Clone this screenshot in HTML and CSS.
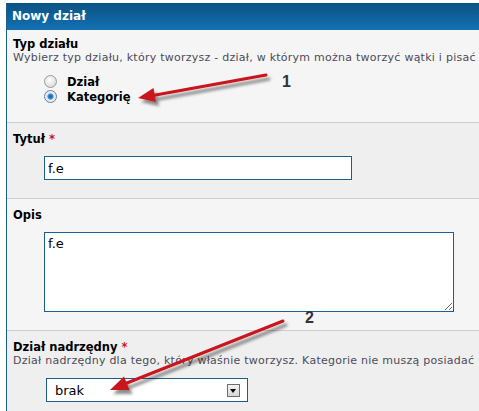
FILE: index.html
```html
<!DOCTYPE html>
<html lang="pl">
<head>
    <meta charset="UTF-8">
    <title>Nowy dział</title>
    <link rel="stylesheet" href="styles.css">
</head>
<body>
    <div class="panel">
        <div class="panel-head">Nowy dział</div>

        <div class="row light first">
            <div class="label">Typ działu</div>
            <div class="hint">Wybierz typ działu, który tworzysz - dział, w którym można tworzyć wątki i pisać</div>
            <div class="radios">
                <label class="radio"><span class="dot"></span>Dział</label>
                <label class="radio"><span class="dot on"></span>Kategorię</label>
            </div>
        </div>

        <div class="row">
            <div class="label">Tytuł <span class="req">*</span></div>
            <div class="field">
                <input type="text" class="text-input" value="f.e">
            </div>
        </div>

        <div class="row light">
            <div class="label">Opis</div>
            <div class="field">
                <textarea class="text-area" spellcheck="false">f.e</textarea>
            </div>
        </div>

        <div class="row">
            <div class="label">Dział nadrzędny <span class="req">*</span></div>
            <div class="hint">Dział nadrzędny dla tego, który właśnie tworzysz. Kategorie nie muszą posiadać</div>
            <div class="field">
                <div class="select">
                    <span class="select-value">brak</span>
                    <span class="select-btn"></span>
                </div>
            </div>
        </div>
    </div>

    <!-- annotation arrows drawn over the form -->
    <svg class="arrows" width="479" height="411" viewBox="0 0 479 411">
        <defs>
            <filter id="shadow" x="-20%" y="-50%" width="140%" height="200%">
                <feDropShadow dx="3" dy="4" stdDeviation="1.6" flood-color="#000" flood-opacity="0.45"/>
            </filter>
        </defs>
        <g filter="url(#shadow)" fill="#c8141b" stroke="#c8141b">
            <line x1="266" y1="75" x2="150" y2="96" stroke-width="3" stroke-linecap="round"/>
            <polygon points="138,98 156,102 153.5,88" stroke="none"/>
            <line x1="283" y1="321" x2="122" y2="385" stroke-width="3" stroke-linecap="round"/>
            <polygon points="110,390 129.5,390 124,376.5" stroke="none"/>
        </g>
    </svg>
    <span class="num num-1">1</span>
    <span class="num num-2">2</span>
</body>
</html>
```

FILE: styles.css
```css
body {
    margin: 0;
    font-family: "DejaVu Sans", Verdana, sans-serif;
    font-size: 11px;
    background: #fff;
    overflow: hidden;
}
.panel {
    margin: 3px 0 0 6px;
    width: 640px;
    border-left: 1px solid #1a5f92;
}
.panel-head {
    height: 27px;
    line-height: 27px;
    padding-left: 5px;
    background: linear-gradient(#0a5283, #1371b4);
    color: #fff;
    font-weight: bold;
    font-size: 12px;
}
.row {
    padding: 9px 6px 18px;
    border-top: 1px solid #cdcdcd;
    background: #efefef;
}
.row.light {
    background: #f5f5f5;
}
.row.first {
    border-top: none;
    padding-top: 7px;
}
.label {
    font-weight: bold;
    font-size: 11.5px;
    line-height: 14px;
    color: #000;
}
.req {
    color: #d4141b;
}
.hint {
    line-height: 14px;
    color: #4c4c58;
    letter-spacing: 0.25px;
    white-space: nowrap;
}
.radios {
    margin: 9px 0 0 31px;
    display: flex;
    flex-direction: column;
}
.radio {
    display: flex;
    align-items: center;
    height: 15px;
    font-weight: bold;
    font-size: 11.5px;
    color: #000;
}
.dot {
    width: 11px;
    height: 11px;
    margin-right: 10px;
    border: 1px solid #9a9a9a;
    border-radius: 50%;
    background: radial-gradient(circle at 40% 35%, #ffffff, #cfcfcf);
    box-sizing: content-box;
}
.dot.on {
    border-color: #6f7f91;
    background: radial-gradient(circle, #0f5fa5 0, #3a8bd0 2.5px, #dfe6ec 3.5px, #eef1f4 6px);
}
.field {
    margin: 10px 0 0 31px;
}
.text-input {
    display: block;
    width: 308px;
    height: 24px;
    box-sizing: border-box;
    border: 1px solid #1c5e8e;
    padding: 0 3px;
    font-family: "DejaVu Sans", Verdana, sans-serif;
    font-size: 13px;
    background: #fff;
    margin: 0;
}
.text-area {
    display: block;
    width: 410px;
    height: 80px;
    box-sizing: border-box;
    border: 1px solid #1c5e8e;
    padding: 3px 3px;
    font-family: "DejaVu Sans", Verdana, sans-serif;
    font-size: 13px;
    background: #fff;
    margin: 0;
}
.select {
    display: flex;
    align-items: center;
    width: 202px;
    height: 24px;
    margin: 1px 0 0 2px;
    box-sizing: border-box;
    border: 1px solid #1c5e8e;
    background: #fff;
    padding: 0 7px 0 8px;
    font-size: 13px;
    color: #000;
}
.select-value {
    flex: 1;
}
.select-btn {
    width: 11px;
    height: 11px;
    border: 1px solid #6d6d6d;
    background: linear-gradient(#f4f4f4, #d6d6d6);
    position: relative;
}
.select-btn::after {
    content: "";
    position: absolute;
    left: 2px;
    top: 4px;
    border-left: 3.5px solid transparent;
    border-right: 3.5px solid transparent;
    border-top: 4px solid #000;
}
.arrows {
    position: absolute;
    left: 0;
    top: 0;
    pointer-events: none;
}
.num {
    position: absolute;
    font-family: "Liberation Sans", Arial, sans-serif;
    font-weight: bold;
    font-size: 16px;
    line-height: 16px;
    color: #333;
}
.num-1 {
    left: 282px;
    top: 74px;
}
.num-2 {
    left: 305px;
    top: 310px;
}
```
